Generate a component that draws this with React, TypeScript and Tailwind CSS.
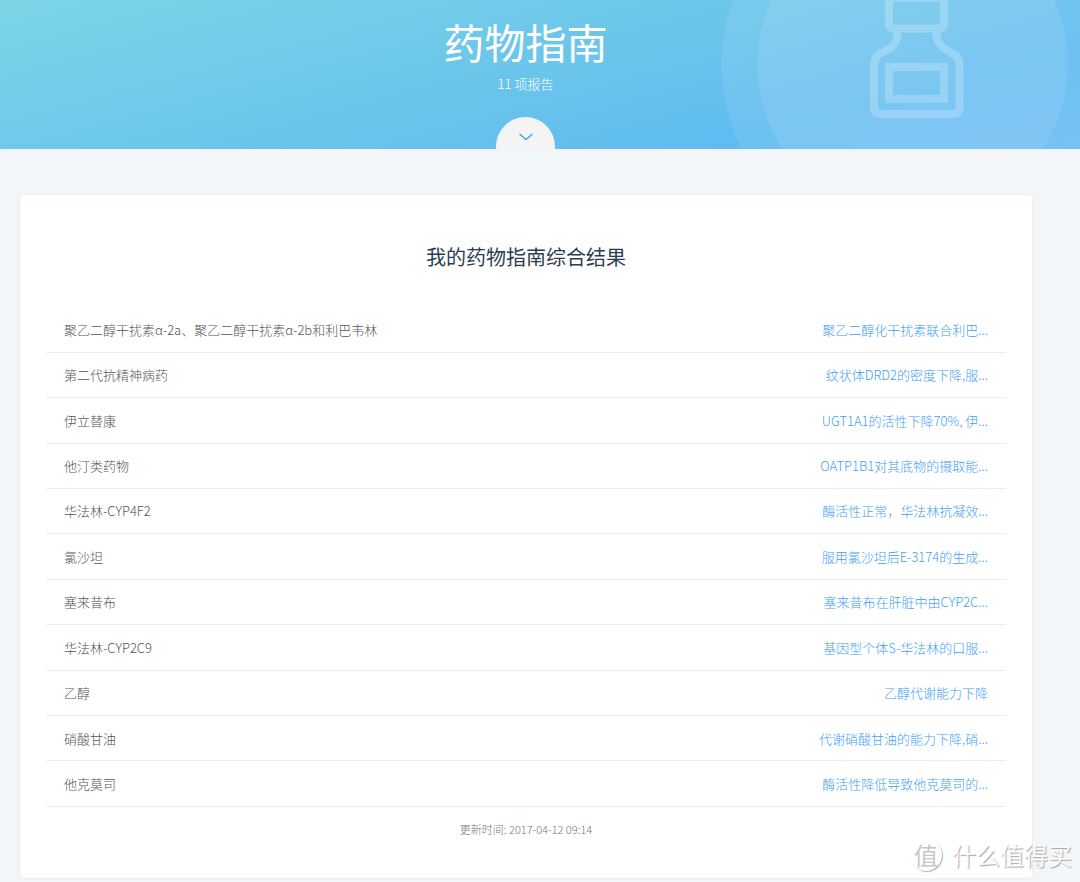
interface DrugReport {
    name: string;
    result: string;
}

const reports: DrugReport[] = [
    { name: "聚乙二醇干扰素α-2a、聚乙二醇干扰素α-2b和利巴韦林", result: "聚乙二醇化干扰素联合利巴..." },
    { name: "第二代抗精神病药", result: "纹状体DRD2的密度下降,服..." },
    { name: "伊立替康", result: "UGT1A1的活性下降70%, 伊..." },
    { name: "他汀类药物", result: "OATP1B1对其底物的摄取能..." },
    { name: "华法林-CYP4F2", result: "酶活性正常，华法林抗凝效..." },
    { name: "氯沙坦", result: "服用氯沙坦后E-3174的生成..." },
    { name: "塞来昔布", result: "塞来昔布在肝脏中由CYP2C..." },
    { name: "华法林-CYP2C9", result: "基因型个体S-华法林的口服..." },
    { name: "乙醇", result: "乙醇代谢能力下降" },
    { name: "硝酸甘油", result: "代谢硝酸甘油的能力下降,硝..." },
    { name: "他克莫司", result: "酶活性降低导致他克莫司的..." },
];

function BottleArt() {
    return (
        <svg
            className="absolute top-0 right-0 h-full"
            width="360"
            height="149"
            viewBox="720 0 360 149"
            fill="none"
            aria-hidden="true"
        >
            <circle cx="912.5" cy="64" r="191" fill="#fff" fillOpacity="0.09" />
            <circle cx="912.5" cy="64" r="155.5" fill="#fff" fillOpacity="0.09" />
            <g stroke="#fff" strokeWidth="8" opacity="0.22">
                <path d="M889 -2.500H944V23Q944 28.500 938.500 28.500H894.500Q889 28.500 889 23Z" />
                <path d="M897 31V35C897 42 892 47.500 886 50.500C879 54 874 56.500 874 65V107Q874 114 881 114H952.500Q959.500 114 959.500 107V65C959.500 56.500 954.500 54 947.500 50.500C941.500 47.500 936.500 42 936.500 35V31" />
                <rect x="889" y="67" width="55" height="32" />
            </g>
        </svg>
    );
}

function Header() {
    return (
        <header className="relative h-[149px] overflow-hidden bg-[linear-gradient(165deg,#7cd4e5,#6cc6ea_45%,#5fbbf1_78%,#6abbf6)] pr-[29px]">
            <BottleArt />
            <div className="relative flex h-full flex-col items-center text-white">
                <h1 className="mt-2 text-[41px] leading-[66px]">药物指南</h1>
                <p className="text-[13px] leading-5 font-light">11 项报告</p>
                <button
                    aria-label="展开"
                    className="mt-auto flex h-8 w-[59px] items-center justify-center rounded-t-[30px] bg-[#f4f4f4] pt-2 text-[#42a5f5]"
                >
                    <svg width="14" height="8" viewBox="0 0 14 8" fill="none" stroke="currentColor" strokeWidth="1.500">
                        <path d="M0.500 1L7 6.500L13.500 1" />
                    </svg>
                </button>
            </div>
        </header>
    );
}

function Watermark() {
    return (
        <div className="absolute right-2 bottom-[11px] flex items-center gap-2.5 text-white/90 select-none [text-shadow:1px_1px_1px_#a3a7aa]">
            <span className="flex size-8 items-center justify-center rounded-full text-[24px] text-[#c4c6c8] shadow-[1px_1px_1px_#b4b7ba] [text-shadow:none]">
                值
            </span>
            <span className="text-[24px] leading-8">什么值得买</span>
        </div>
    );
}

export default function App() {
    return (
        <div className="relative min-h-screen bg-[#f3f6f9] pb-[3px] font-['Noto_Sans_CJK_SC',sans-serif]">
            <Header />
            <main className="pt-[46px] pr-12 pl-5">
                <section className="rounded-sm bg-white px-[26px] pb-[39px] shadow-[0_0_2px_#d9e0e6]">
                    <h2 className="pt-[46px] pb-[35px] text-center text-[20px] leading-8 text-[#2c3e50]">
                        我的药物指南综合结果
                    </h2>
                    <table className="h-[499px] w-full border-collapse text-[13px] font-light">
                        <tbody>
                            {reports.map(({ name, result }) => (
                                <tr key={name} className="border-b border-[#ededed]">
                                    <td className="pl-[18px] text-[#555]">{name}</td>
                                    <td className="pr-[18px] text-right text-[#42a0f5]">
                                        <a href="#">{result}</a>
                                    </td>
                                </tr>
                            ))}
                        </tbody>
                    </table>
                    <p className="mt-3 text-center text-[11px] leading-5 font-light text-[#777]">
                        更新时间: 2017-04-12 09:14
                    </p>
                </section>
            </main>
            <Watermark />
        </div>
    );
}
